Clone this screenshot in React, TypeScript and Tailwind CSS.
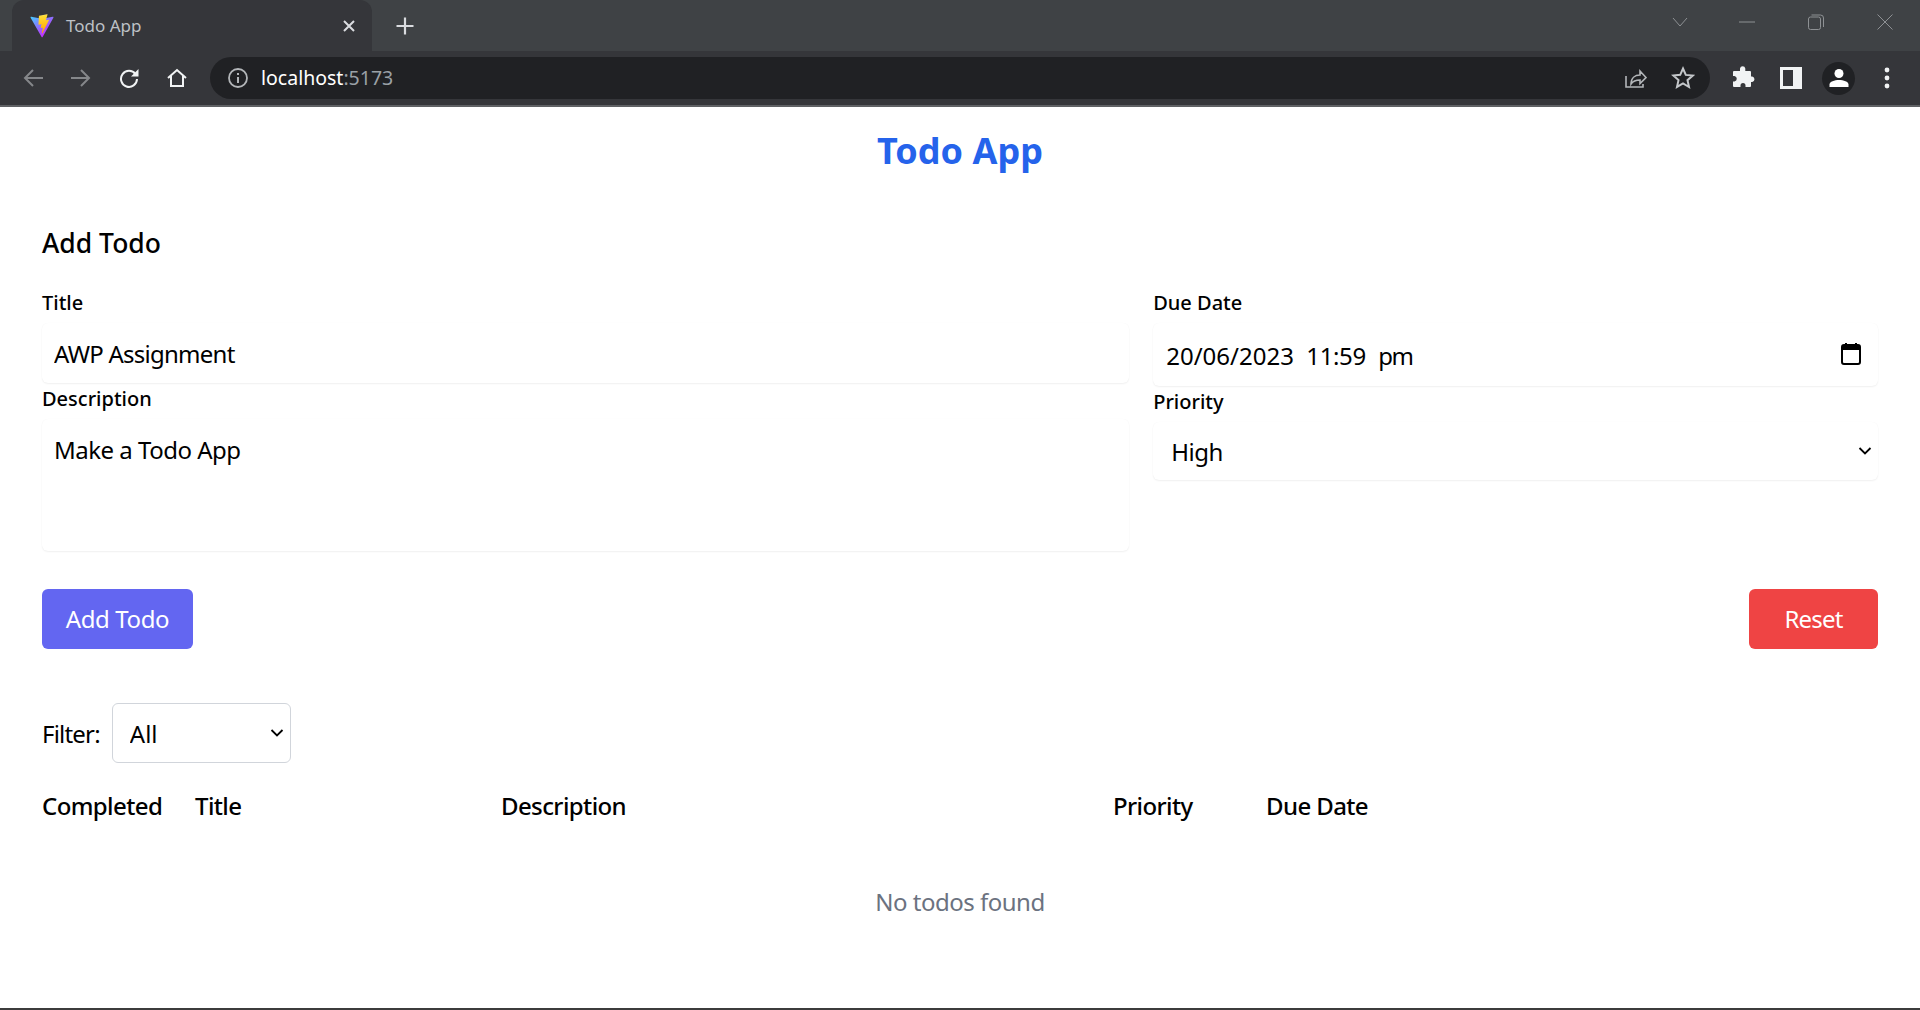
function Chevron({ className }: { className: string }) {
  return (
    <svg viewBox="0 0 16 16" className={className} fill="none" stroke="currentColor" strokeWidth="1.8">
      <path d="M2.5 5l5.5 5.5L13.5 5" />
    </svg>
  );
}

function Vite() {
  return (
    <svg viewBox="0 0 410 404" className="w-6 h-6" fill="none">
      <path d="M399.641 59.5246L215.643 388.545C211.844 395.338 202.084 395.378 198.228 388.618L10.5817 59.5563C6.38087 52.1896 12.6802 43.2665 21.0281 44.7586L205.223 77.6824C206.398 77.8924 207.601 77.8904 208.776 77.6763L389.119 44.8058C397.439 43.2894 403.768 52.1434 399.641 59.5246Z" fill="url(#va)" />
      <path d="M292.965 1.5744L156.801 28.2552C154.563 28.6937 152.906 30.5903 152.771 32.8664L144.395 174.33C144.198 177.662 147.258 180.248 150.51 179.498L188.42 170.749C191.967 169.931 195.172 173.055 194.443 176.622L183.18 231.775C182.422 235.487 185.907 238.661 189.532 237.56L212.947 230.446C216.577 229.344 220.065 232.527 219.297 236.242L201.398 322.875C200.278 328.294 207.486 331.249 210.492 326.603L212.5 323.5L323.454 102.072C325.312 98.3645 322.108 94.137 318.036 94.9228L279.014 102.454C275.347 103.161 272.227 99.746 273.262 96.1583L298.731 7.86689C299.767 4.27314 296.636 0.855181 292.965 1.5744Z" fill="url(#vb)" />
      <defs>
        <linearGradient id="va" x1="6" y1="33" x2="235" y2="344" gradientUnits="userSpaceOnUse">
          <stop stopColor="#41D1FF" />
          <stop offset="1" stopColor="#BD34FE" />
        </linearGradient>
        <linearGradient id="vb" x1="194.651" y1="8.818" x2="236.076" y2="292.989" gradientUnits="userSpaceOnUse">
          <stop stopColor="#FFEA83" />
          <stop offset="0.083" stopColor="#FFDD35" />
          <stop offset="1" stopColor="#FFA800" />
        </linearGradient>
      </defs>
    </svg>
  );
}

function BrowserChrome() {
  return (
    <div className="shrink-0 font-['Noto_Sans',sans-serif]">
      <div className="h-[51px] bg-[#3f4245] flex items-end pl-3">
        <div className="w-[360px] h-[51px] bg-[#35363a] rounded-t-xl flex items-center pl-[18px] pr-4">
          <Vite />
          <span className="ml-3 text-[17px] text-[#bdc1c6]">Todo App</span>
          <svg viewBox="0 0 14 14" className="ml-auto w-[14px] h-[14px] text-[#dadce0]" stroke="currentColor" strokeWidth="2" fill="none">
            <path d="M2 2l10 10M12 2L2 12" />
          </svg>
        </div>
        <svg viewBox="0 0 20 20" className="w-5 h-5 ml-[23px] mb-[15px] text-[#dadce0]" stroke="currentColor" strokeWidth="2.2" fill="none">
          <path d="M10 1.5v17M1.5 10h17" />
        </svg>
        <div className="ml-auto flex items-center h-[51px] pb-[7px] text-[#8e9194]">
          <svg viewBox="0 0 16 10" className="w-4 h-[10px] mr-[51px]" stroke="currentColor" fill="none"><path d="M1 1l7 8 7-8" /></svg>
          <svg viewBox="0 0 16 2" className="w-4 h-[2px] mr-[53px]" stroke="currentColor" fill="none"><path d="M0 1h16" /></svg>
          <svg viewBox="0 0 16 16" className="w-4 h-4 mr-[53px]" stroke="currentColor" fill="none">
            <rect x="0.5" y="3" width="12" height="12.5" rx="2" />
            <path d="M3.5 1h9a3 3 0 0 1 3 3v9" />
          </svg>
          <svg viewBox="0 0 16 16" className="w-4 h-4 mr-[27px]" stroke="currentColor" fill="none"><path d="M0.5 0.5l15 15M15.5 0.5l-15 15" /></svg>
        </div>
      </div>
      <div className="h-[56px] bg-[#35363a] border-b-2 border-[#5f6164] flex items-center pl-[23px]">
        <svg viewBox="0 0 20 20" className="w-5 h-5 text-[#85878a]" stroke="currentColor" strokeWidth="2" fill="none"><path d="M20 10H2M10 2l-8 8 8 8" /></svg>
        <svg viewBox="0 0 20 20" className="w-5 h-5 ml-7 text-[#85878a]" stroke="currentColor" strokeWidth="2" fill="none"><path d="M0 10h18M10 2l8 8-8 8" /></svg>
        <svg viewBox="0 0 20 20" className="w-5 h-5 ml-7 text-[#f1f3f4]" fill="none">
          <path d="M16.5 6.2A8 8 0 1 0 18 11" stroke="currentColor" strokeWidth="2" />
          <path d="M19.5 1v7.5H12z" fill="currentColor" />
        </svg>
        <svg viewBox="0 0 20 20" className="w-5 h-5 ml-7 text-[#f1f3f4]" stroke="currentColor" strokeWidth="2" fill="none"><path d="M1 10l9-8 9 8M4 8v10h12V8" /></svg>
        <div className="ml-[23px] w-[1500px] h-[42px] rounded-full bg-[#202124] flex items-center pl-[18px] pr-[15px]">
          <svg viewBox="0 0 20 20" className="w-5 h-5 text-[#b3b6b9]" fill="none">
            <circle cx="10" cy="10" r="9" stroke="currentColor" strokeWidth="1.8" />
            <path d="M10 9v6M10 5v2" stroke="currentColor" strokeWidth="2" />
          </svg>
          <span className="ml-[13px] text-[19.5px] text-white">localhost<span className="text-[#9aa0a6]">:5173</span></span>
          <svg viewBox="0 0 24 24" className="ml-auto w-[24px] h-[24px] text-[#b3b6b9]" stroke="currentColor" strokeWidth="1.6" fill="none">
            <path d="M3 10v11h17v-3M8 18c0-6 4-9 9-9V5l6 6.5-6 6V14c-4 0-7 1-9 4z" />
          </svg>
          <svg viewBox="0 0 24 24" className="ml-[24px] w-6 h-6 text-[#c4c7ca]" stroke="currentColor" strokeWidth="2" fill="none">
            <path d="M12 2.5l2.8 6.4 6.9.7-5.2 4.6 1.5 6.8L12 17.4 6 20.9l1.5-6.8-5.2-4.6 6.9-.7z" />
          </svg>
        </div>
        <svg viewBox="0 0 24 24" className="ml-[21px] w-6 h-6 text-[#f1f3f4]" fill="currentColor">
          <path d="M9 2.5a2.7 2.7 0 0 1 5.3 0V5H19a1 1 0 0 1 1 1v4.5h1.2a2.8 2.8 0 0 1 0 5.5H20v4a1 1 0 0 1-1 1h-4.5v-1.4a2.5 2.5 0 0 0-5 0V21H3a1 1 0 0 1-1-1v-4.5h1.5a2.8 2.8 0 0 0 0-5.5H2V6a1 1 0 0 1 1-1h6z" />
        </svg>
        <svg viewBox="0 0 22 22" className="ml-[25px] w-[22px] h-[22px] text-[#f1f3f4]" fill="none">
          <path d="M0 0h22v22H0zM3 3v16h10V3z" fill="currentColor" fillRule="evenodd" />
        </svg>
        <div className="ml-[20px] w-[33px] h-[33px] rounded-full bg-[#202124] flex items-center justify-center">
          <svg viewBox="0 0 20 20" className="w-5 h-5 text-white" fill="currentColor">
            <circle cx="10" cy="5.5" r="4.5" />
            <path d="M0.5 19v-2.5c0-3 5-4.5 9.5-4.5s9.5 1.5 9.5 4.5V19z" />
          </svg>
        </div>
        <svg viewBox="0 0 6 22" className="ml-[29px] w-[6px] h-[22px] text-[#f1f3f4]" fill="currentColor">
          <circle cx="3" cy="3" r="2.4" /><circle cx="3" cy="11" r="2.4" /><circle cx="3" cy="19" r="2.4" />
        </svg>
      </div>
    </div>
  );
}

const fieldClass = "w-full bg-white rounded-md shadow-[0_1px_2px_rgba(0,0,0,0.06),0_0_1px_rgba(0,0,0,0.04)] text-[24px] tracking-[-0.5px] text-black outline-none";
const labelClass = "block h-9 text-[20px] font-medium leading-8 text-black";

export default function App() {
  return (
    <div className="h-[1010px] w-full overflow-hidden flex flex-col bg-white font-['Noto_Sans',sans-serif]">
      <BrowserChrome />
      <main className="flex-1 min-h-0 px-[42px]">
        <h1 className="text-center text-[36px] leading-[46px] font-bold text-[#2563eb] mt-[21px]">Todo App</h1>
        <h2 className="text-[26.5px] leading-8 font-medium text-black mt-[53px]">Add Todo</h2>
        <form className="mt-[28px]">
          <div className="grid grid-cols-[3fr_2fr] gap-6">
            <div>
              <label className={labelClass}>Title</label>
              <input readOnly value="AWP Assignment" className={`${fieldClass} h-[60px] px-3 tracking-[-0.75px]`} />
              <label className={labelClass}>Description</label>
              <textarea readOnly value="Make a Todo App" className={`${fieldClass} h-[132px] px-3 py-[13px] leading-9 block resize-none`} />
            </div>
            <div>
              <label className={labelClass}>Due Date</label>
              <div className={`${fieldClass} h-[63px] pl-[13px] pr-[17px] flex items-center justify-between`}>
                <span className="whitespace-pre mt-[2px] tracking-[0px]">20/06/2023  <span className="tracking-[-0.4px]">11:59</span>  <span className="tracking-[-1.5px]">pm</span></span>
                <svg viewBox="0 0 20 24" className="w-5 h-6 -mt-[1px] text-black" fill="none">
                  <path d="M5 1v3M15 1v3" stroke="currentColor" strokeWidth="2" />
                  <rect x="1" y="3" width="18" height="19" rx="2" stroke="currentColor" strokeWidth="2" />
                  <rect x="1" y="3" width="18" height="5" fill="currentColor" />
                </svg>
              </div>
              <label className={labelClass}>Priority</label>
              <div className="relative">
                <select defaultValue="High" className={`${fieldClass} h-[58px] pl-[18px] pt-[2px] appearance-none`}>
                  <option>Low</option>
                  <option>Medium</option>
                  <option>High</option>
                </select>
                <Chevron className="absolute right-[5px] top-[21px] w-4 h-4 text-black pointer-events-none" />
              </div>
            </div>
          </div>
          <div className="flex justify-between mt-[38px]">
            <button type="button" className="w-[151px] h-[60px] rounded-md bg-[#6366f1] text-white text-[24px] tracking-[-0.4px]">Add Todo</button>
            <button type="button" className="w-[129px] h-[60px] rounded-md bg-[#ef4444] text-white text-[24px] tracking-[-0.8px]">Reset</button>
          </div>
        </form>
        <div className="flex items-center mt-[54px]">
          <span className="text-[24px] text-black tracking-[-0.8px] mt-[2px]">Filter:</span>
          <div className="relative ml-3">
            <select defaultValue="All" className="block w-[179px] h-[60px] rounded-md border border-[#d1d5db] bg-white pl-[17px] pt-[2px] text-[24px] text-black appearance-none outline-none">
              <option>All</option>
              <option>Active</option>
              <option>Completed</option>
            </select>
            <Chevron className="absolute right-[6px] top-[22px] w-4 h-4 text-black pointer-events-none" />
          </div>
        </div>
        <div className="grid grid-cols-12 mt-[25px] text-[24px] leading-9 font-medium text-black tracking-[-0.6px]">
          <div>Completed</div>
          <div className="col-span-2">Title</div>
          <div className="col-span-4">Description</div>
          <div>Priority</div>
          <div>Due Date</div>
        </div>
        <p className="text-center text-[24px] leading-9 text-[#6b7280] tracking-[-0.5px] mt-[60px]">No todos found</p>
      </main>
      <div className="h-[2px] bg-[#3c3c3c] shrink-0" />
    </div>
  );
}
